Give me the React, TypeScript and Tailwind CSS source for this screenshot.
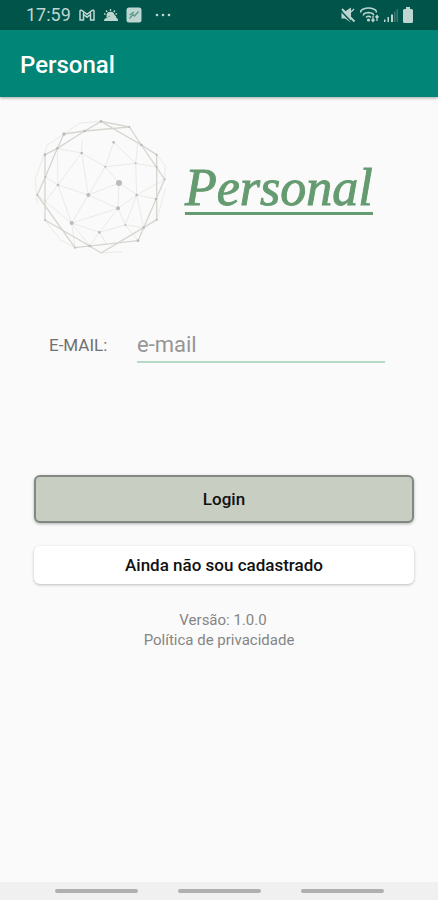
const edges: [number, number, number, number][] = [
  [243, 37, 328, 54], [243, 37, 194, 66], [194, 66, 132, 75], [132, 75, 112, 118],
  [328, 54, 364, 108], [364, 108, 410, 137], [112, 118, 75, 137], [75, 137, 75, 333],
  [112, 118, 76, 204], [76, 204, 52, 258], [52, 258, 165, 416], [75, 333, 209, 411],
  [165, 416, 354, 395], [209, 411, 243, 432], [354, 395, 371, 356], [371, 356, 410, 332],
  [410, 137, 410, 332], [364, 108, 434, 211], [434, 211, 371, 356], [243, 37, 364, 108],
  [194, 66, 328, 54], [194, 66, 112, 118], [371, 356, 243, 432],
];

const faintEdges: [number, number, number, number][] = [
  [185, 132, 114, 228], [185, 132, 205, 258], [185, 132, 256, 173], [185, 132, 112, 118],
  [185, 132, 186, 96], [256, 173, 281, 100], [256, 173, 205, 258], [256, 173, 347, 163],
  [256, 173, 297, 222], [281, 100, 347, 163], [347, 163, 350, 258], [297, 222, 350, 258],
  [297, 222, 294, 298], [297, 222, 205, 258], [205, 258, 294, 298], [205, 258, 155, 342],
  [205, 258, 114, 228], [114, 228, 155, 342], [114, 228, 112, 118], [294, 298, 155, 342],
  [294, 298, 350, 258], [294, 298, 316, 348], [294, 298, 238, 370], [155, 342, 238, 370],
  [238, 370, 316, 348], [316, 348, 371, 356], [350, 258, 408, 270], [350, 258, 316, 348],
  [350, 258, 434, 211], [155, 342, 209, 411], [52, 258, 155, 342], [76, 204, 114, 228],
  [114, 228, 75, 280], [238, 370, 209, 411], [238, 370, 260, 405], [347, 163, 410, 174],
  [347, 163, 354, 96], [132, 75, 82, 108], [82, 108, 46, 210], [46, 210, 52, 285],
  [132, 75, 180, 42], [180, 42, 243, 37], [410, 137, 436, 170], [436, 170, 434, 211],
  [436, 240, 410, 332], [75, 333, 120, 392], [120, 392, 165, 416], [243, 432, 308, 428],
  [155, 342, 165, 416], [316, 348, 354, 395], [350, 258, 371, 356],
];

const nodes: [number, number, number][] = [
  [297, 222, 9], [294, 298, 6], [205, 258, 6], [155, 342, 6], [132, 75, 5], [194, 66, 4],
  [243, 37, 4], [408, 270, 4], [185, 132, 4], [114, 228, 4], [238, 370, 4], [371, 356, 4],
  [281, 100, 4], [350, 258, 4], [347, 163, 3], [256, 173, 3], [364, 108, 4], [328, 54, 3],
  [410, 137, 3], [434, 211, 3], [75, 137, 4], [112, 118, 4], [76, 204, 3], [52, 258, 3],
  [75, 333, 3], [165, 416, 3], [209, 411, 4], [354, 395, 4], [410, 332, 3], [316, 348, 3],
  [410, 174, 3],
];

function Sphere() {
  return (
    <svg viewBox="36 24 414 420" className="h-[140px] w-[138px] shrink-0" aria-hidden="true">
      <g stroke="#ebeae8" strokeWidth="3">
        {faintEdges.map(([a, b, c, d], i) => (
          <line key={i} x1={a} y1={b} x2={c} y2={d} />
        ))}
      </g>
      <g stroke="#d6d5d0" strokeWidth="4">
        {edges.map(([a, b, c, d], i) => (
          <line key={i} x1={a} y1={b} x2={c} y2={d} />
        ))}
      </g>
      <g fill="#bcbbb9">
        {nodes.map(([x, y, r], i) => (
          <circle key={i} cx={x} cy={y} r={r} />
        ))}
      </g>
    </svg>
  );
}

function StatusBar() {
  return (
    <div className="flex h-[30px] items-center justify-between bg-[#005449] pr-6 pl-[26px] text-[#bdd6d1]">
      <div className="flex items-center">
        <span className="w-[45px] text-[18px] leading-8">17:59</span>
        <svg viewBox="0 0 16 12" className="ml-2 h-3 w-4" fill="none" stroke="currentColor" aria-hidden="true">
          <path d="M1 11V2.200Q1.300.6 2.800 1.400L8 5.400l5.200-4Q14.700.6 15 2.200V11h-3.500V5.500L8 8.200 4.500 5.500V11Z" strokeWidth="1.500" />
          <path d="M4.500 5.500V2.500M11.500 5.500V2.500" strokeWidth="1" />
        </svg>
        <svg viewBox="0 0 16 14" className="ml-2 h-[14px] w-4" fill="currentColor" aria-hidden="true">
          <path d="M3.500 8a4 4 0 0 1 8-.5Q9 6.500 8 9 5.500 7.500 3.500 10Z" />
          <path d="M1 13q0-3 3-3 1-2 3-1 1.500-3 4.500-2 2 1 2 3 2 .5 1.500 3Z" />
          <path d="M7.500 1v2M3 2.500l1.300 1.500M12 2.500l-1.300 1.500M1 6h1.500M12.500 6H14" stroke="currentColor" strokeWidth="1.300" />
        </svg>
        <svg viewBox="0 0 16 16" className="ml-[7px] h-4 w-4" aria-hidden="true">
          <rect x="0.500" y="0.500" width="15" height="15" rx="2.500" fill="currentColor" />
          <path d="M3.500 11.500 7 7.500l1.500 1.500 4-4.500M3.500 8 8 5" fill="none" stroke="#5d958c" strokeWidth="1.300" />
        </svg>
        <svg viewBox="0 0 18 4" className="ml-3 h-1 w-[18px]" fill="currentColor" aria-hidden="true">
          <circle cx="3" cy="2" r="1.300" />
          <circle cx="9" cy="2" r="1.300" />
          <circle cx="15" cy="2" r="1.300" />
        </svg>
      </div>
      <div className="flex items-center gap-1">
        <svg viewBox="0 0 16 16" className="h-4 w-4" fill="currentColor" aria-hidden="true">
          <path d="M1.500 4.500H5L11 .5v15L5 11.500H1.500Z" />
          <path d="m.5 3.500 12 12.500" stroke="#005449" strokeWidth="1.500" />
          <path d="m2 2 12.500 12.500" stroke="currentColor" strokeWidth="1.800" />
          <path d="m11 5 3-3" stroke="currentColor" strokeWidth="1.200" />
        </svg>
        <svg viewBox="0 0 20 16" className="h-4 w-5" fill="none" stroke="currentColor" strokeWidth="1.500" aria-hidden="true">
          <path d="M1 5.500Q0 3.500 3 2.200 8.500 0 14 2.200 17 3.500 16 5.500M3.500 8.500Q3 6 8.500 5.500 14 6 13.500 8.500M6 10.500q2.500-2.500 5 0" />
          <circle cx="8.500" cy="13" r="0.800" fill="currentColor" />
          <path d="M13 9v5m-1.500-1.500L13 14.500l1.500-2M17 14V9m-1.500 1.500L17 8.500l1.500 2" strokeWidth="1.300" />
        </svg>
        <svg viewBox="0 0 14 16" className="h-4 w-[14px]" fill="currentColor" aria-hidden="true">
          <path d="M0 12.500h1.500V15H0zM3.500 10H5v5H3.500zM7 7.500h2V15H7z" />
          <path d="M10 4.500h1.500V15H10zM12.500 2H14v13h-1.500z" opacity="0.300" />
        </svg>
        <svg viewBox="0 0 12 16" className="h-4 w-3" fill="currentColor" aria-hidden="true">
          <path d="M4 0h4v2h1.500Q11 2 11 3.500v11Q11 16 9.500 16h-7Q1 16 1 14.500v-11Q1 2 2.500 2H4Z" />
        </svg>
      </div>
    </div>
  );
}

export default function App() {
  return (
    <div className="flex min-h-screen flex-col bg-[#fafafa] font-['Roboto',sans-serif]">
      <StatusBar />
      <header className="flex h-[67px] items-center bg-[#008577] px-5 pt-[2px] shadow-[0_1px_3px_rgba(0,0,0,0.35)]">
        <h1 className="text-[24px] leading-8 font-medium text-white">Personal</h1>
      </header>

      <main className="flex grow flex-col px-6 pt-5 pl-8">
        <div className="flex items-center">
          <Sphere />
          <div className="ml-[15px] border-b-[3px] border-[#659b70] pt-1 font-['Liberation_Serif',serif] text-[52px] leading-[48px] text-[#659b70] italic [-webkit-text-stroke:1px_#659b70]">
            Personal
          </div>
        </div>

        <form className="mt-[70px] flex flex-col" onSubmit={(e) => e.preventDefault()}>
          <div className="mr-[29px] flex items-center pl-[17px]">
            <label htmlFor="email" className="w-[88px] shrink-0 text-[17px] leading-6 text-[#707070]">
              E-MAIL:
            </label>
            <input
              id="email"
              type="email"
              placeholder="e-mail"
              className="h-9 min-w-0 grow border-b-2 border-[#b5dac6] bg-transparent text-[22px] text-[#333] outline-none placeholder:text-[#969696]"
            />
          </div>
          <button
            type="submit"
            className="mt-[112px] ml-[2px] h-12 rounded-md border-2 border-[#838982] bg-[#c8cec1] pt-[2px] text-[17px] font-medium text-[#111] shadow-[0_1px_3px_rgba(0,0,0,0.3)]"
          >
            Login
          </button>
          <button
            type="button"
            className="mt-[23px] ml-[2px] h-[38px] rounded-md bg-white pt-[2px] text-[17px] font-medium text-[#111] shadow-[0_1px_3px_rgba(0,0,0,0.25)]"
          >
            Ainda não sou cadastrado
          </button>
        </form>

        <footer className="mt-[26px] flex flex-col items-center text-[15px] leading-5 text-[#858585]">
          <p>Versão: 1.0.0</p>
          <a href="#privacidade" className="pr-2">Política de privacidade</a>
        </footer>
      </main>

      <nav className="flex h-[18px] items-center justify-center gap-10 bg-[#f0f0f0]" aria-label="Sistema">
        <button type="button" aria-label="Recentes" className="h-1 w-[83px] rounded-full bg-[#b0b0b0]" />
        <button type="button" aria-label="Início" className="h-1 w-[83px] rounded-full bg-[#b0b0b0]" />
        <button type="button" aria-label="Voltar" className="h-1 w-[83px] rounded-full bg-[#b0b0b0]" />
      </nav>
    </div>
  );
}
